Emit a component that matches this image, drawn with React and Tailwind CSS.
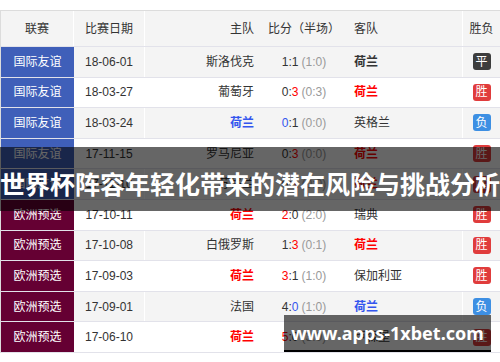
import React from "react";

const RED = "#ff0000";
const BLUE = "#3355ee";

const rows = [
  { lg: "国际友谊", d: "18-06-01", h: "斯洛伐克", hs: "1", as: "1", ht: "(1:0)", a: "荷兰", res: "平", nl: "away" },
  { lg: "国际友谊", d: "18-03-27", h: "葡萄牙", hs: "0", as: "3", ht: "(0:3)", a: "荷兰", res: "胜", nl: "away" },
  { lg: "国际友谊", d: "18-03-24", h: "荷兰", hs: "0", as: "1", ht: "(0:0)", a: "英格兰", res: "负", nl: "home" },
  { lg: "国际友谊", d: "17-11-15", h: "罗马尼亚", hs: "0", as: "3", ht: "(0:0)", a: "荷兰", res: "胜", nl: "away" },
  { lg: "国际友谊", d: "17-11-10", h: "苏格兰", hs: "0", as: "1", ht: "(0:0)", a: "荷兰", res: "胜", nl: "away" },
  { lg: "欧洲预选", d: "17-10-11", h: "荷兰", hs: "2", as: "0", ht: "(2:0)", a: "瑞典", res: "胜", nl: "home" },
  { lg: "欧洲预选", d: "17-10-08", h: "白俄罗斯", hs: "1", as: "3", ht: "(0:1)", a: "荷兰", res: "胜", nl: "away" },
  { lg: "欧洲预选", d: "17-09-03", h: "荷兰", hs: "3", as: "1", ht: "(1:0)", a: "保加利亚", res: "胜", nl: "home" },
  { lg: "欧洲预选", d: "17-09-01", h: "法国", hs: "4", as: "0", ht: "(1:0)", a: "荷兰", res: "负", nl: "away" },
  { lg: "欧洲预选", d: "17-06-10", h: "荷兰", hs: "5", as: "0", ht: "(3:0)", a: "卢森堡", res: "胜", nl: "home" },
];

const resColor = (r) => (r === "胜" ? RED : r === "负" ? BLUE : "#333333");

function Team({ name, isNl, res }) {
  if (!isNl) return <span className="text-[#333]">{name}</span>;
  return (
    <span className="font-bold" style={{ color: resColor(res) }}>
      {name}
    </span>
  );
}

function Badge({ res }) {
  const bg = res === "胜" ? "bg-[#e03c3c]" : res === "负" ? "bg-[#3d8fe3]" : "bg-[#3d3d3d]";
  return (
    <span className={`${bg} inline-flex h-[17px] w-[18px] items-center justify-center rounded-[3px] text-[12px] leading-none text-white`}>
      {res}
    </span>
  );
}

export default function App() {
  return (
    <div
      className="relative h-[362px] w-[500px] overflow-hidden bg-white pt-[10px] text-[12px] text-[#333]"
      style={{ fontFamily: '"Liberation Sans", "Noto Sans CJK SC", sans-serif' }}
    >
      <div className="border-l border-t border-[#dcdcdc]">
        <div className="grid h-[36px] grid-cols-[73px_71px_117px_84px_117px_37px] border-b border-[#e2e2ea] bg-[#f4f4f4]">
          <div className="flex items-center justify-center border-r border-white">联赛</div>
          <div className="flex items-center justify-center border-r border-white">比赛日期</div>
          <div className="flex items-center justify-end pr-[8px]">主队</div>
          <div className="flex items-center justify-center">比分（半场）</div>
          <div className="flex items-center border-r border-white pl-[8px]">客队</div>
          <div className="flex items-center justify-center">胜负</div>
        </div>
        {rows.map((r, i) => {
          const gray = i % 2 === 0;
          const lgBg = r.lg === "国际友谊" ? "bg-[#3f5fb9]" : "bg-[#650033]";
          const hsColor = r.nl === "home" ? resColor(r.res) : "#333";
          const asColor = r.nl === "away" ? resColor(r.res) : "#333";
          return (
            <div
              key={i}
              className={`grid h-[30.6px] grid-cols-[73px_71px_117px_84px_117px_37px] border-b border-[#e2e2ea] ${gray ? "bg-[#f4f4f4]" : "bg-white"}`}
            >
              <div className={`${lgBg} flex items-center justify-center text-white`}>{r.lg}</div>
              <div className="flex items-center justify-center border-r border-white">{r.d}</div>
              <div className="flex items-center justify-end pr-[8px]">
                <Team name={r.h} isNl={r.nl === "home"} res={r.res} />
              </div>
              <div className="flex items-center justify-center whitespace-nowrap">
                <span style={{ color: hsColor }}>{r.hs}</span>
                <span>:</span>
                <span style={{ color: asColor }}>{r.as}</span>
                <span className="ml-[3px] text-[#999]">{r.ht}</span>
              </div>
              <div className="flex items-center border-r border-white pl-[8px]">
                <Team name={r.a} isNl={r.nl === "away"} res={r.res} />
              </div>
              <div className="flex items-center justify-center">
                <Badge res={r.res} />
              </div>
            </div>
          );
        })}
      </div>

      <div className="absolute left-0 right-0 top-[147px] flex h-[64px] items-center justify-center bg-black/60 pt-[8px]">
        <span
          className="whitespace-nowrap text-[25px] font-bold leading-none text-white"
          style={{ fontFamily: '"Noto Sans CJK SC", sans-serif' }}
        >
          世界杯阵容年轻化带来的潜在风险与挑战分析
        </span>
      </div>

      <div className="absolute left-[284px] top-[315px] flex h-[37px] w-[207px] items-center justify-center border-b-2 border-black bg-black/60">
        <span
          className="whitespace-nowrap text-[18px] font-bold leading-none text-white"
          style={{ fontFamily: '"Noto Sans", "Liberation Sans", sans-serif' }}
        >
          www.apps-1xbet.com
        </span>
      </div>
    </div>
  );
}
